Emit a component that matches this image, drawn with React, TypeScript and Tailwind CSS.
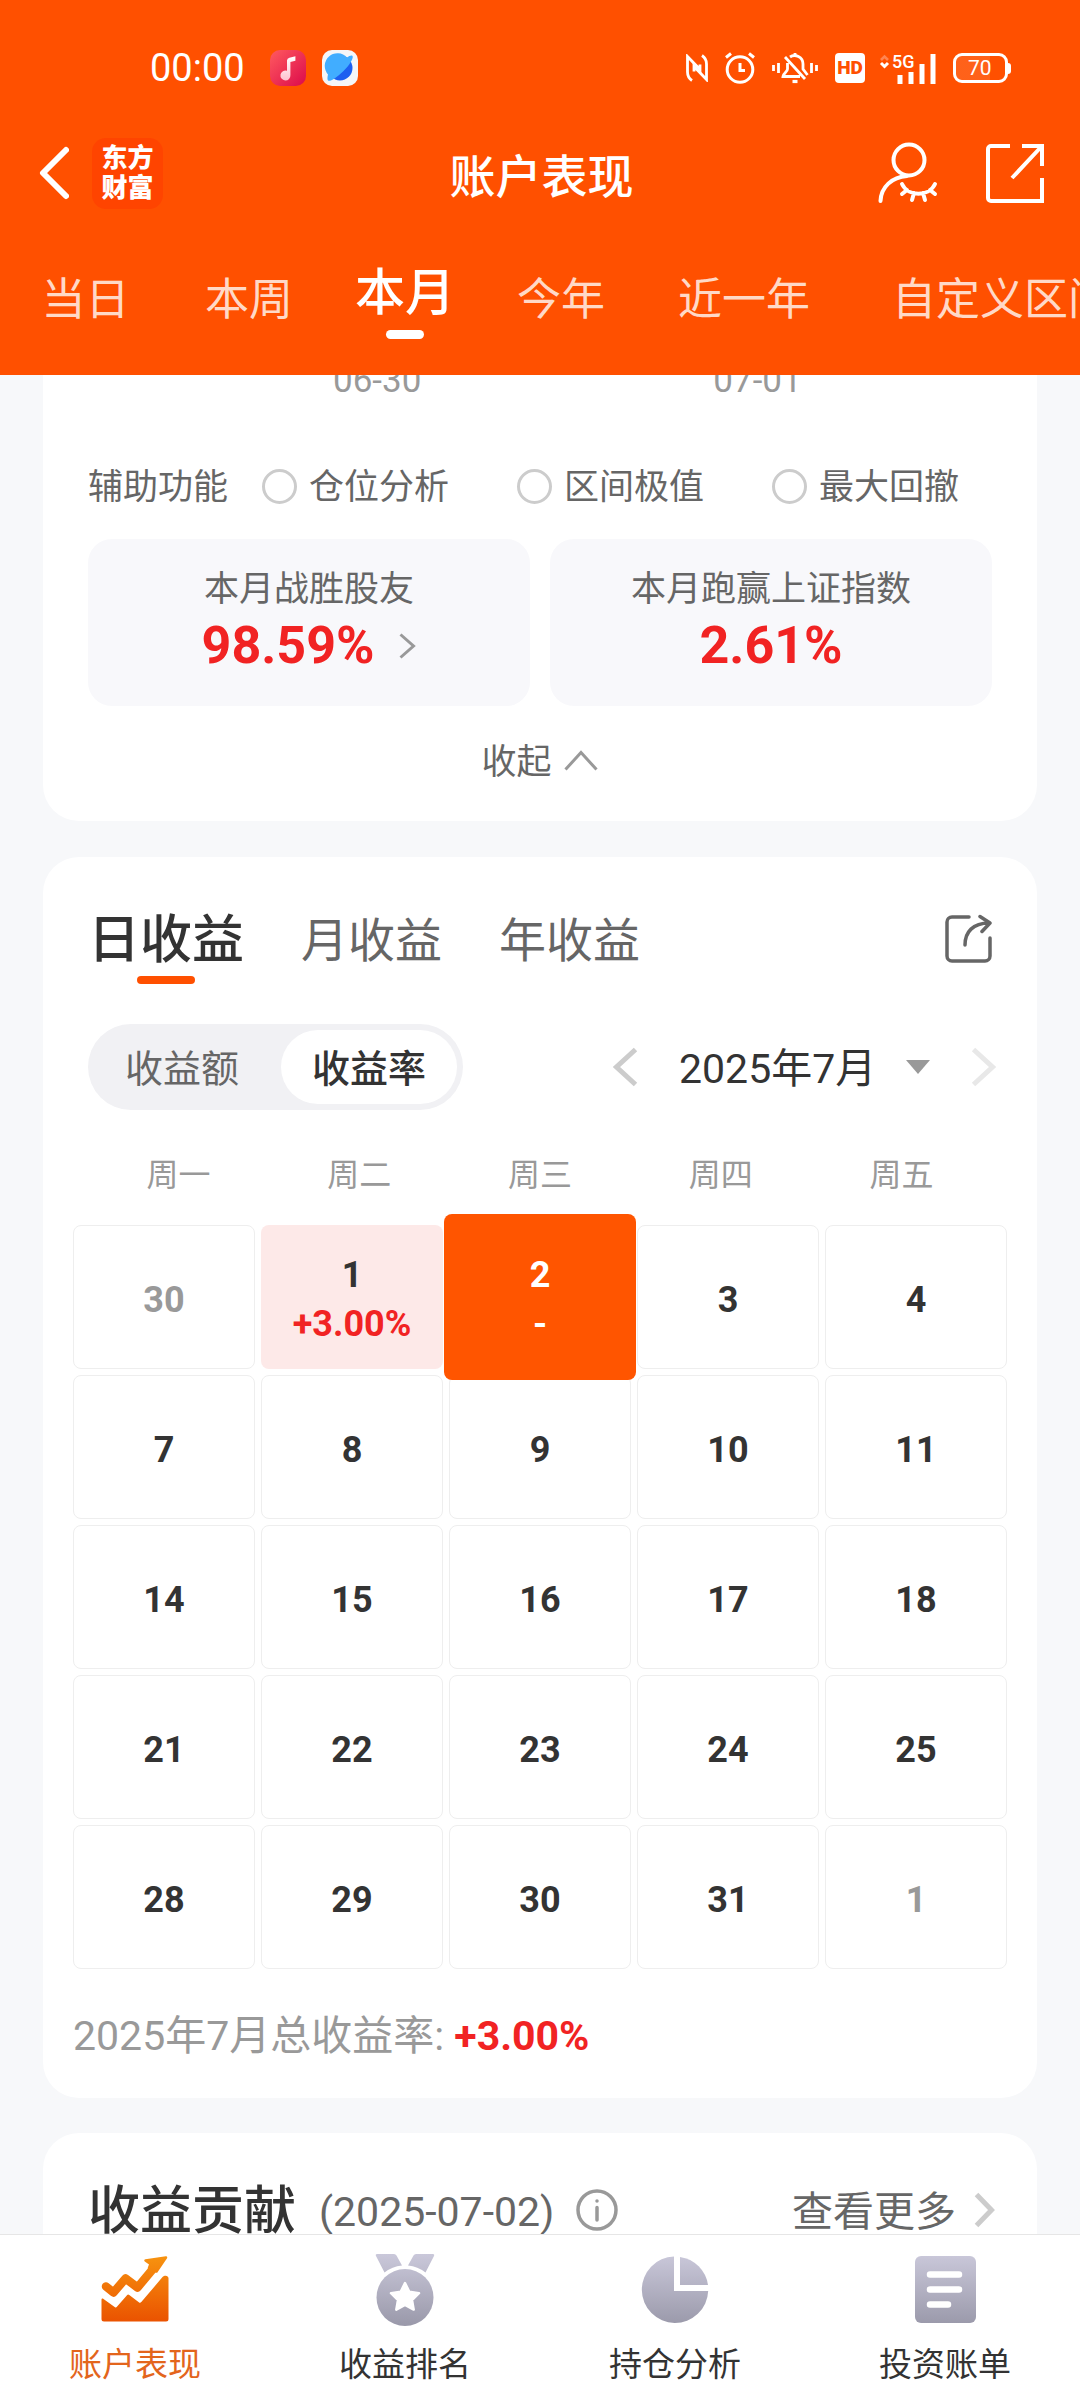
import { useState } from "react";
import type { ReactNode } from "react";

type Tab = { label: string; width: string };

const rangeTabs: Tab[] = [
  { label: "当日", width: "w-[171px]" },
  { label: "本周", width: "w-[156px]" },
  { label: "本月", width: "w-[156px]" },
  { label: "今年", width: "w-[156px]" },
  { label: "近一年", width: "w-[210px]" },
  { label: "自定义区间", width: "w-[306px]" },
];

const weekdays = ["周一", "周二", "周三", "周四", "周五"];

type Day = { day: number; outside?: boolean; rate?: string };

const days: Day[] = [
  { day: 30, outside: true },
  { day: 1, rate: "+3.00%" },
  { day: 2, rate: "-" },
  { day: 3 },
  { day: 4 },
  { day: 7 },
  { day: 8 },
  { day: 9 },
  { day: 10 },
  { day: 11 },
  { day: 14 },
  { day: 15 },
  { day: 16 },
  { day: 17 },
  { day: 18 },
  { day: 21 },
  { day: 22 },
  { day: 23 },
  { day: 24 },
  { day: 25 },
  { day: 28 },
  { day: 29 },
  { day: 30 },
  { day: 31 },
  { day: 1, outside: true },
];

function Chevron({ dir, className, w, h, stroke }: { dir: "left" | "right" | "up"; className: string; w: number; h: number; stroke: number }) {
  const p = stroke / 2 + 1;
  const d =
    dir === "left"
      ? `M${w - p} ${p}L${p} ${h / 2}L${w - p} ${h - p}`
      : dir === "right"
        ? `M${p} ${p}L${w - p} ${h / 2}L${p} ${h - p}`
        : `M${p} ${h - p}L${w / 2} ${p}L${w - p} ${h - p}`;
  return (
    <svg width={w} height={h} viewBox={`0 0 ${w} ${h}`} fill="none" stroke="currentColor" strokeWidth={stroke} className={className} aria-hidden="true">
      <path d={d} />
    </svg>
  );
}

function StatusBar() {
  return (
    <div className="flex h-[136px] items-center pr-[69px] pl-[150px]">
      <span className="text-[38px] leading-[40px]">00:00</span>
      <svg width="36" height="36" viewBox="0 0 36 36" className="ml-[25px]" aria-hidden="true">
        <defs>
          <linearGradient id="music" x1="0" y1="0" x2="1" y2="1">
            <stop offset="0" stopColor="#ff5a5f" />
            <stop offset="1" stopColor="#dc0a4b" />
          </linearGradient>
          <linearGradient id="note" x1="0" y1="0" x2="0" y2="1">
            <stop offset="0" stopColor="#fff" />
            <stop offset="1" stopColor="#ffc0ce" />
          </linearGradient>
        </defs>
        <rect width="36" height="36" rx="10" fill="url(#music)" />
        <path d="M17 22V10.500a3 3 0 0 1 2.400-2.800l6-1.500v4.600l-5 1.200V25a5 5 0 1 1-3.400-4.300Z" fill="url(#note)" />
      </svg>
      <svg width="36" height="36" viewBox="0 0 36 36" className="ml-[16px]" aria-hidden="true">
        <rect width="36" height="36" rx="10" fill="#f5f6f8" />
        <circle cx="18" cy="18" r="12.500" fill="#1d5ff0" />
        <path d="M6 24.500A12.500 12.500 0 0 1 25 7.500c2-1.500 4.500-2.500 5.300-1.700 1.200 1.200 0 4.200-2.800 8.200-3 4.300-8.500 10-15 14.500-2.800 1.900-5.500 2.800-6.500 2-.8-.9-.7-3.500 0-6Z" fill="#41adff" />
      </svg>

      <div className="ml-auto flex items-center">
        <svg width="22" height="28" viewBox="0 0 22 28" fill="none" stroke="#fff" strokeWidth="2.800" aria-hidden="true">
          <path d="M6 26.500C3 24.500 1.500 22 1.500 18V2.500L14 15.500v-5" />
          <path d="M16 1.500C19 3.500 20.500 6 20.500 10v15.500L8 12.500v5" />
        </svg>
        <svg width="30" height="32" viewBox="0 0 30 32" fill="none" stroke="#fff" strokeWidth="3" className="ml-[17px]" aria-hidden="true">
          <circle cx="15" cy="17.500" r="12.800" />
          <path d="M15 11v7.500h5M1 5.500 6 1.500M29 5.500 24 1.500" />
        </svg>
        <svg width="46" height="32" viewBox="0 0 46 32" fill="none" stroke="#fff" strokeWidth="2.800" className="ml-[17px]" aria-hidden="true">
          <path d="M1.500 13v6M6.500 11v10M39.500 11v10M44.500 13v6" />
          <path d="M23 1v3M18 5C23 1.500 31 5 31 12v5l4.500 6M15.500 11v6c0 3-4 4-4.500 7.500h17M13 5l20 22" />
          <path d="M20.500 29.500h5" strokeWidth="3.200" />
        </svg>
        <span className="ml-[17px] flex h-[30px] w-[30px] items-center justify-center rounded-[4px] bg-white text-[19px] leading-[30px] font-black text-[#ff5000]">HD</span>
        <span className="relative ml-[14px] h-[31px] w-[58px]">
          <svg width="58" height="31" viewBox="0 0 58 31" aria-hidden="true">
            <path d="m2 7 3.500-3.500L9 7" fill="none" stroke="#ff8450" strokeWidth="2.600" />
            <path d="m2 10 3.500 3.500L9 10" fill="none" stroke="#fff" strokeWidth="3" />
            <path d="M18.500 22h5v9h-5zM29.500 19h5v12h-5zM40.500 11h5v20h-5zM51.500 1h5v30h-5z" fill="#fff" />
          </svg>
          <span className="absolute top-0 left-[13px] text-[18px] leading-[18px] font-medium">5G</span>
        </span>
        <span className="ml-[16px] flex h-[30px] w-[55px] items-center rounded-[9px] border-3 border-white bg-linear-to-r from-white/10 from-70% to-transparent to-70% pl-[12px] text-[21px] leading-[24px]">70</span>
        <span className="h-[11px] w-[3px] rounded-r bg-white" />
      </div>
    </div>
  );
}

function Header() {
  const [active, setActive] = useState("本月");
  return (
    <header className="relative z-10 shrink-0 overflow-hidden bg-[#ff5000] text-white">
      <StatusBar />
      <div className="flex h-[74px] items-center pr-[36px] pl-[39px]">
        <div className="flex flex-1 items-center gap-[23px]">
          <button type="button" aria-label="返回">
            <svg width="30" height="54" viewBox="0 0 30 54" fill="none" stroke="#fff" strokeWidth="6" strokeLinecap="round" strokeLinejoin="round">
              <path d="M27 4 4 27l23 23" />
            </svg>
          </button>
          <span className="flex h-[71px] w-[71px] flex-col items-center justify-center rounded-[14px] bg-[#ff4400] text-[26px] leading-[30px] font-black">
            <span>东方</span>
            <span>财富</span>
          </span>
        </div>
        <h1 className="pt-[8px] text-[46px] leading-[60px] font-medium">账户表现</h1>
        <div className="flex flex-1 items-center justify-end gap-[48px]">
          <button type="button" aria-label="隐藏账户">
            <svg width="60" height="62" viewBox="0 0 60 62" fill="none" stroke="#fff" strokeWidth="4" strokeLinecap="round">
              <circle cx="31" cy="18" r="15.500" />
              <path d="M29 34C14 35 3 45 2.500 59" />
              <path d="M24 42c6 13 27 13 33 0M29 48l-5 4M36 51l-2 7M45 51l2 7M52 48l5 4" />
            </svg>
          </button>
          <button type="button" aria-label="分享">
            <svg width="58" height="60" viewBox="0 0 58 60" fill="none" stroke="#fff" strokeWidth="4">
              <path d="M24 3H5a3 3 0 0 0-3 3v49a3 3 0 0 0 3 3h51V35M36 3h20v20M26 35 55 4" />
            </svg>
          </button>
        </div>
      </div>
      <nav className="flex h-[165px] items-start" aria-label="时间区间">
        {rangeTabs.map((t) => (
          <button key={t.label} type="button" onClick={() => setActive(t.label)} className={`${t.width} flex shrink-0 flex-col items-center whitespace-nowrap`}>
            {active === t.label ? (
              <>
                <span className="mt-[53px] text-[50px] leading-[60px] font-medium">{t.label}</span>
                <span className="mt-[7px] h-[9px] w-[38px] rounded-full bg-white" />
              </>
            ) : (
              <span className="mt-[60px] text-[44px] leading-[60px] text-[#ffd9c7]">{t.label}</span>
            )}
          </button>
        ))}
      </nav>
    </header>
  );
}

function StatCard({ label, value, more }: { label: string; value: string; more?: boolean }) {
  return (
    <div className="flex flex-1 flex-col items-center rounded-[24px] bg-[#f8f8fb] pt-[27px] pb-[28px]">
      <span className="text-[35px] leading-[48px] text-[#666]">{label}</span>
      <span className="flex items-center gap-[24px] text-[52px] leading-[64px] font-bold text-[#f12323]">
        {value}
        {more && <Chevron dir="right" w={18} h={28} stroke={3} className="text-[#999]" />}
      </span>
    </div>
  );
}

function SummaryCard() {
  const [option, setOption] = useState("");
  return (
    <section className="-mt-[14px] rounded-b-[36px] bg-white px-[45px] pb-[34px]">
      <div className="flex gap-[292px] pl-[245px] text-[35px] leading-[40px] text-[#999]">
        <span>06-30</span>
        <span>07-01</span>
      </div>
      <div className="mt-[59px] flex items-center text-[35px] leading-[48px] text-[#666]">
        <span className="pt-[4px]">辅助功能</span>
        <div className="ml-[34px] flex gap-[68px]">
          {["仓位分析", "区间极值", "最大回撤"].map((o) => (
            <label key={o} className="flex items-center gap-[12px]">
              <input
                type="radio"
                name="assist"
                checked={option === o}
                onChange={() => setOption(o)}
                className="h-[35px] w-[35px] appearance-none rounded-full border-3 border-[#ccc] checked:border-[#ff5000]"
              />
              <span className="pt-[4px]">{o}</span>
            </label>
          ))}
        </div>
      </div>
      <div className="mt-[27px] flex gap-[20px]">
        <StatCard label="本月战胜股友" value="98.59%" more />
        <StatCard label="本月跑赢上证指数" value="2.61%" />
      </div>
      <button type="button" className="mx-auto mt-[29px] flex items-center gap-[11px] text-[35px] leading-[48px] text-[#666]">
        <span className="pt-[4px]">收起</span>
        <Chevron dir="up" w={36} h={22} stroke={3} className="text-[#999]" />
      </button>
    </section>
  );
}

function DayCell({ day, selected, onSelect }: { day: Day; selected: boolean; onSelect: () => void }) {
  let look = "border border-[#eee] bg-white text-[#333]";
  if (selected) look = "relative -mx-[5px] -my-[11px] bg-[#ff5500] text-white";
  else if (day.outside) look = "border border-[#eee] bg-white text-[#999]";
  else if (day.rate) look = "bg-[#fde9e8] text-[#333]";
  return (
    <button type="button" onClick={onSelect} className={`${look} flex flex-col items-center justify-center rounded-[8px] pt-[6px] text-[36px] leading-[49px] font-bold`}>
      <span>{day.day}</span>
      {day.rate && <span className={selected ? "text-white" : "text-[#f12323]"}>{day.rate}</span>}
    </button>
  );
}

function CalendarCard() {
  const [period, setPeriod] = useState("日收益");
  const [mode, setMode] = useState("收益率");
  const [selected, setSelected] = useState(2);
  return (
    <section className="mt-[36px] rounded-[36px] bg-white px-[30px] pb-[34px]">
      <div className="flex items-start px-[15px] pt-[54px]">
        <div className="flex gap-[57px]">
          {["日收益", "月收益", "年收益"].map((p) => (
            <button key={p} type="button" onClick={() => setPeriod(p)} className="flex flex-col items-center">
              {period === p ? (
                <>
                  <span className="text-[52px] leading-[60px] font-medium text-[#333]">{p}</span>
                  <span className="mt-[5px] h-[8px] w-[58px] rounded-full bg-[#ff5000]" />
                </>
              ) : (
                <span className="text-[47px] leading-[60px] text-[#666]">{p}</span>
              )}
            </button>
          ))}
        </div>
        <button type="button" aria-label="分享收益" className="mt-[3px] ml-auto">
          <svg width="48" height="50" viewBox="0 0 48 50" fill="none" stroke="#666" strokeWidth="3.500" strokeLinecap="round" strokeLinejoin="round">
            <path d="M25 3H8a5 5 0 0 0-5 5v34a5 5 0 0 0 5 5h33a5 5 0 0 0 5-5V24" />
            <path d="M21 31C21 18 29 9 45 9M36 2.500 46 9l-8 8.500" />
          </svg>
        </button>
      </div>

      <div className="mt-[40px] flex items-center pr-[11px] pl-[15px]">
        <div className="flex h-[86px] items-center gap-[11px] rounded-full bg-[#f1f1f4] p-[6px]">
          {["收益额", "收益率"].map((m) => (
            <button
              key={m}
              type="button"
              onClick={() => setMode(m)}
              className={
                mode === m
                  ? "h-[74px] rounded-full bg-white px-[31px] pt-[4px] text-[38px] leading-[70px] font-medium text-[#333]"
                  : "h-[74px] px-[31px] pt-[4px] text-[38px] leading-[70px] text-[#666]"
              }
            >
              {m}
            </button>
          ))}
        </div>
        <div className="ml-auto flex items-center">
          <button type="button" aria-label="上个月">
            <Chevron dir="left" w={26} h={42} stroke={5} className="text-[#ccc]" />
          </button>
          <label className="relative mr-[40px] ml-[40px] flex items-center">
            <select aria-label="选择月份" defaultValue="7" className="appearance-none pt-[4px] pr-[53px] text-[41px] leading-[60px] text-[#333]">
              <option value="6">2025年6月</option>
              <option value="7">2025年7月</option>
            </select>
            <svg width="24" height="14" viewBox="0 0 24 14" className="pointer-events-none absolute right-0" aria-hidden="true">
              <path d="M0 0h24L12 14Z" fill="#999" />
            </svg>
          </label>
          <button type="button" aria-label="下个月">
            <Chevron dir="right" w={26} h={42} stroke={5} className="text-[#e8e8e8]" />
          </button>
        </div>
      </div>

      <div className="mt-[43px] grid grid-cols-5 px-[15px] text-center text-[32px] leading-[44px] text-[#999]">
        {weekdays.map((w) => (
          <span key={w}>{w}</span>
        ))}
      </div>
      <div className="mt-[28px] grid auto-rows-[144px] grid-cols-5 gap-[6px]">
        {days.map((d, i) => (
          <DayCell key={i} day={d} selected={selected === i} onSelect={() => setSelected(i)} />
        ))}
      </div>
      <p className="mt-[39px] text-[41px] leading-[56px] text-[#999]">
        2025年7月总收益率: <strong className="font-bold text-[#f12323]">+3.00%</strong>
      </p>
    </section>
  );
}

function ContributionCard() {
  return (
    <section className="mt-[35px] rounded-t-[36px] bg-white pt-[44px] pr-[42px] pb-[60px] pl-[45px]">
      <div className="flex items-center">
        <h2 className="pt-[5px] text-[52px] leading-[60px] font-medium text-[#333]">收益贡献</h2>
        <span className="ml-[23px] pt-[4px] text-[41px] leading-[60px] text-[#666]">(2025-07-02)</span>
        <button type="button" aria-label="说明" className="ml-[22px]">
          <svg width="42" height="42" viewBox="0 0 42 42" fill="none" stroke="#999" strokeWidth="3.500" strokeLinecap="round">
            <circle cx="21" cy="21" r="19" />
            <path d="M21 18.500V31M21 12v.1" />
          </svg>
        </button>
        <a href="#more" className="ml-auto flex items-center gap-[17px] text-[41px] leading-[60px] text-[#666]">
          <span className="pt-[4px]">查看更多</span>
          <Chevron dir="right" w={22} h={38} stroke={5} className="text-[#ccc]" />
        </a>
      </div>
    </section>
  );
}

function NavIcon({ children }: { children: ReactNode }) {
  return (
    <svg width="72" height="74" viewBox="0 0 72 74" aria-hidden="true">
      {children}
    </svg>
  );
}

function BottomNav() {
  const items: { label: string; icon: ReactNode }[] = [
    {
      label: "账户表现",
      icon: (
        <NavIcon>
          <defs>
            <linearGradient id="hot" gradientUnits="userSpaceOnUse" x1="0" y1="3" x2="0" y2="69">
              <stop offset="0" stopColor="#f7930f" />
              <stop offset="1" stopColor="#ea5200" />
            </linearGradient>
            <linearGradient id="cool" gradientUnits="userSpaceOnUse" x1="0" y1="1" x2="0" y2="72">
              <stop offset="0" stopColor="#cac8da" />
              <stop offset="1" stopColor="#9a99aa" />
            </linearGradient>
          </defs>
          <path d="M2.500 46.500c0-1 1-1.300 2-.6l11.500 8.300c.8.600 1.300.4 1.900-.4L28 42.300c.7-.9 1.500-.9 2.300-.2l9.500 7.200c1 .8 1.800.6 2.500-.2l21.200-25c1.800-2.200 6-2 6 1.200V66a2.500 2.500 0 0 1-2.500 2.500H5A2.500 2.500 0 0 1 2.500 66Z" fill="url(#hot)" />
          <path d="M7 33.500 14.500 39.500 26.500 25.500 38.500 34.500 56 13.500" fill="none" stroke="url(#hot)" strokeWidth="8.500" strokeLinecap="round" strokeLinejoin="round" />
          <path d="M46.500 7.500 67 4.500 57.500 18.500 50 15l1.500-4Z" fill="url(#hot)" stroke="url(#hot)" strokeWidth="2.500" strokeLinejoin="round" />
        </NavIcon>
      ),
    },
    {
      label: "收益排名",
      icon: (
        <NavIcon>
          <path d="M8 1h17a3 3 0 0 1 2.500 1.500L33 12.500a33 33 0 0 0-17.500 7L7 3c-.6-1.200 0-2 1-2ZM64 1H47a3 3 0 0 0-2.500 1.500L39 12.500a33 33 0 0 1 17.500 7L65 3c.6-1.200 0-2-1-2Z" fill="url(#cool)" />
          <circle cx="36" cy="44.500" r="28.500" fill="url(#cool)" />
          <path d="m36 30 4.300 8.800 9.700 1.400-7 6.800 1.700 9.600L36 52l-8.700 4.600L29 47l-7-6.800 9.700-1.400Z" fill="#fff" stroke="#fff" strokeWidth="2.500" strokeLinejoin="round" />
        </NavIcon>
      ),
    },
    {
      label: "持仓分析",
      icon: (
        <NavIcon>
          <path d="M35 3.500V38h34.200A33.200 33.200 0 1 1 35 3.500Z" fill="url(#cool)" />
          <path d="M41 4v28h28A33 33 0 0 0 41 4Z" fill="url(#cool)" />
        </NavIcon>
      ),
    },
    {
      label: "投资账单",
      icon: (
        <NavIcon>
          <rect x="6" y="3" width="61" height="67" rx="6" fill="url(#cool)" />
          <path d="M21 21.500h29M21 36.500h29M21 51.500h18" stroke="#fff" strokeWidth="6.500" strokeLinecap="round" />
        </NavIcon>
      ),
    },
  ];
  return (
    <nav className="relative z-10 grid shrink-0 grid-cols-4 border-t border-[#e6e6e6] bg-white pt-[18px] pb-[13px]" aria-label="主导航">
      {items.map((it, i) => (
        <a key={it.label} href="#nav" className={`flex flex-col items-center gap-[16px] text-[33px] leading-[44px] ${i === 0 ? "text-[#e3651c]" : "text-[#333]"}`}>
          {it.icon}
          {it.label}
        </a>
      ))}
    </nav>
  );
}

export default function App() {
  return (
    <div className="flex h-screen flex-col overflow-hidden bg-[#f7f8fa] font-['Roboto','Noto_Sans_CJK_SC',sans-serif]">
      <Header />
      <main className="min-h-0 flex-1 overflow-hidden px-[43px]">
        <SummaryCard />
        <CalendarCard />
        <ContributionCard />
      </main>
      <BottomNav />
    </div>
  );
}
